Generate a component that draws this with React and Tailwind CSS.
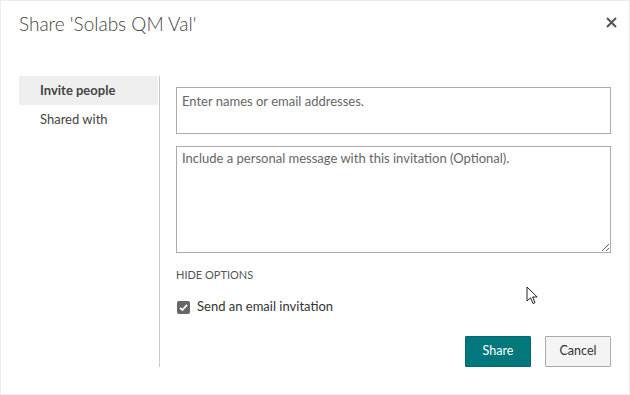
export default function App() {
  const font = { fontFamily: 'Lato, "Open Sans", sans-serif' };
  return (
    <div
      className="relative w-[630px] h-[395px] bg-white border border-[#ececec] overflow-hidden text-[#333]"
      style={font}
    >
      <div className="flex justify-between items-start pl-[18px] pr-[11px] pt-[9px] h-[65px]">
        <div className="text-[19px] leading-[28px] font-light text-[#444]">Share 'Solabs QM Val'</div>
        <button className="mt-[5px] w-[14px] h-[14px] flex items-center justify-center">
          <svg width="11" height="11" viewBox="0 0 11 11">
            <path d="M1 1 L10 10 M10 1 L1 10" stroke="#555" strokeWidth="2" />
          </svg>
        </button>
      </div>
      <div className="flex mt-[10px]">
        <div className="ml-[18px] w-[141px] border-r border-[#c8c8c8] flex flex-col">
          <div className="h-[29px] bg-[#efefef] pl-[21px] flex items-center text-[13px] font-bold text-[#444] mr-[1px]">
            Invite people
          </div>
          <div className="h-[29px] pl-[21px] flex items-center text-[13px] text-[#444]">Shared with</div>
        </div>
        <div className="pl-[16px] pt-[11px] w-[452px] flex flex-col">
          <input
            className="w-[435px] h-[47px] border border-[#ababab] px-[5px] pb-[20px] text-[13px] outline-none placeholder:text-[#666]"
            style={font}
            placeholder="Enter names or email addresses."
          />
          <textarea
            className="mt-[12px] w-[435px] h-[107px] border border-[#ababab] px-[5px] py-[2px] text-[13px] outline-none placeholder:text-[#666]"
            style={font}
            placeholder="Include a personal message with this invitation (Optional)."
          />
          <div className="mt-[14px] text-[11px] leading-[16px] text-[#555]">HIDE OPTIONS</div>
          <div className="mt-[14px] h-[20px] flex items-center">
            <div className="ml-[1px] w-[13px] h-[13px] bg-[#666] rounded-[2px] flex items-center justify-center">
              <svg width="9" height="9" viewBox="0 0 9 9">
                <path d="M1 4.8 L3.4 7 L8 1.8" stroke="white" strokeWidth="1.8" fill="none" />
              </svg>
            </div>
            <span className="ml-[7px] text-[13px] text-[#333]">Send an email invitation</span>
          </div>
          <div className="mt-[19px] flex justify-end gap-[14px] w-[435px]">
            <button className="w-[66px] h-[31px] bg-[#03787c] text-white text-[12.5px] rounded-[1px] border border-[#02686b]">
              Share
            </button>
            <button className="w-[66px] h-[31px] bg-[#f4f4f4] text-[#333] text-[12.5px] border border-[#ababab] rounded-[1px]">
              Cancel
            </button>
          </div>
        </div>
      </div>
      <svg className="absolute left-[525px] top-[285px]" width="14" height="20" viewBox="0 0 14 20">
        <path d="M1 1 L1 15 L4.5 11.8 L7 17.5 L9 16.6 L6.6 11 L11.2 11 Z" fill="white" stroke="#222" strokeWidth="1" strokeLinejoin="round" />
      </svg>
    </div>
  );
}
